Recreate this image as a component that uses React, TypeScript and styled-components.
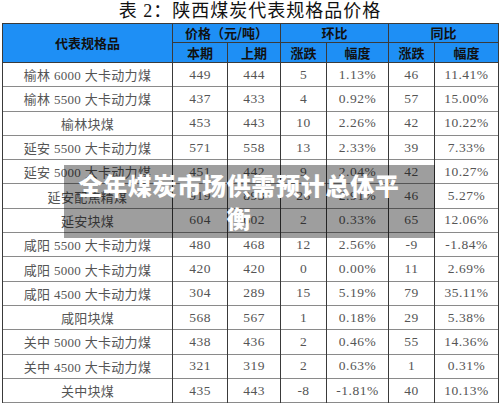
import React from "react";
import styled, { createGlobalStyle } from "styled-components";

const GlobalStyle = createGlobalStyle`
  html, body {
    margin: 0;
    padding: 0;
    background: #ffffff;
  }
`;

const theme = {
  blue: "#1e8ff5",
  line: "#3a3a3a",
  rowLine: "#8a8a8a",
  text: "#555555",
  serif: `"Liberation Serif", "Noto Sans CJK SC", serif`,
  sans: `"Noto Sans CJK SC", sans-serif`,
};

const Page = styled.div`
  position: relative;
  width: 500px;
  height: 404px;
  padding: 0 2px;
  box-sizing: border-box;
  overflow: hidden;
`;

const Title = styled.h1`
  margin: 0;
  height: 23px;
  line-height: 22px;
  text-align: center;
  font-family: ${theme.serif};
  font-weight: 400;
  font-size: 18px;
  letter-spacing: 1px;
  color: #111;
`;

const Table = styled.table`
  width: 496px;
  table-layout: fixed;
  border-collapse: collapse;
  font-family: ${theme.serif};
  border: 1px solid ${theme.line};
`;

const HeadRow = styled.tr<{ $h: number }>`
  height: ${(p) => p.$h}px;
`;

const HeadCell = styled.th`
  background: ${theme.blue};
  color: #111;
  font-family: ${theme.sans};
  font-weight: 700;
  font-size: 13px;
  line-height: 16px;
  padding: 0;
  text-align: center;
  border: 1px solid ${theme.line};
`;

const Row = styled.tr`
  height: 24.3px;
  border-bottom: 1px solid ${theme.rowLine};
`;

const Cell = styled.td<{ $name?: boolean }>`
  padding: 0;
  text-align: center;
  color: ${theme.text};
  font-size: ${(p) => (p.$name ? "13px" : "13.5px")};
  letter-spacing: ${(p) => (p.$name ? "0.3px" : "0.5px")};
  border-left: 1px solid ${theme.line};
  border-right: 1px solid ${theme.line};
  white-space: nowrap;
`;

const Banner = styled.div`
  position: absolute;
  left: 64px;
  top: 165px;
  width: 371px;
  height: 73px;
  box-sizing: border-box;
  padding: 3px 31px 0 10px;
  background: rgba(0, 0, 0, 0.38);
  color: #ffffff;
  font-family: ${theme.sans};
  font-weight: 900;
  font-size: 24px;
  letter-spacing: 0.7px;
  line-height: 33px;
  text-align: center;
`;

type Item = [string, string, string, string, string, string, string];

const rows: Item[] = [
  ["榆林 6000 大卡动力煤", "449", "444", "5", "1.13%", "46", "11.41%"],
  ["榆林 5500 大卡动力煤", "437", "433", "4", "0.92%", "57", "15.00%"],
  ["榆林块煤", "453", "443", "10", "2.26%", "42", "10.22%"],
  ["延安 5500 大卡动力煤", "571", "558", "13", "2.33%", "39", "7.33%"],
  ["延安 5000 大卡动力煤", "451", "442", "9", "2.04%", "42", "10.27%"],
  ["延安配焦精煤", "919", "893", "26", "2.91%", "46", "5.27%"],
  ["延安块煤", "604", "602", "2", "0.33%", "65", "12.06%"],
  ["咸阳 5500 大卡动力煤", "480", "468", "12", "2.56%", "-9", "-1.84%"],
  ["咸阳 5000 大卡动力煤", "420", "420", "0", "0.00%", "11", "2.69%"],
  ["咸阳 4500 大卡动力煤", "304", "289", "15", "5.19%", "79", "35.11%"],
  ["咸阳块煤", "568", "567", "1", "0.18%", "29", "5.38%"],
  ["关中 5000 大卡动力煤", "438", "436", "2", "0.46%", "55", "14.36%"],
  ["关中 4500 大卡动力煤", "321", "319", "2", "0.63%", "1", "0.31%"],
  ["关中块煤", "435", "443", "-8", "-1.81%", "40", "10.13%"],
];

const widths = [170, 55, 53, 46, 62, 46, 64];

const App: React.FC = () => {
  return (
    <Page>
      <GlobalStyle />
      <Title>表 2：陕西煤炭代表规格品价格</Title>
      <Table>
        <colgroup>
          {widths.map((w, i) => (
            <col key={i} style={{ width: w }} />
          ))}
        </colgroup>
        <thead>
          <HeadRow $h={19}>
            <HeadCell rowSpan={2}>代表规格品</HeadCell>
            <HeadCell colSpan={2}>价格（元/吨）</HeadCell>
            <HeadCell colSpan={2}>环比</HeadCell>
            <HeadCell colSpan={2}>同比</HeadCell>
          </HeadRow>
          <HeadRow $h={20}>
            <HeadCell>本期</HeadCell>
            <HeadCell>上期</HeadCell>
            <HeadCell>涨跌</HeadCell>
            <HeadCell>幅度</HeadCell>
            <HeadCell>涨跌</HeadCell>
            <HeadCell>幅度</HeadCell>
          </HeadRow>
        </thead>
        <tbody>
          {rows.map((r) => (
            <Row key={r[0]}>
              {r.map((v, i) => (
                <Cell key={i} $name={i === 0}>
                  {v}
                </Cell>
              ))}
            </Row>
          ))}
        </tbody>
      </Table>
      {/* headline banner laid over the table */}
      <Banner>全年煤炭市场供需预计总体平衡</Banner>
    </Page>
  );
};

export default App;
